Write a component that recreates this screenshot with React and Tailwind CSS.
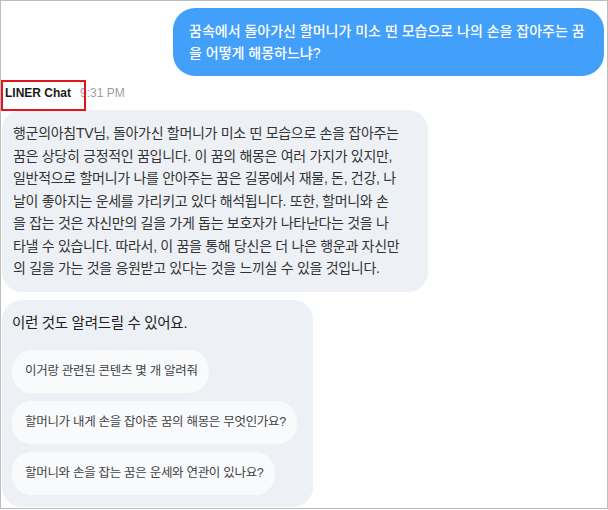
const answer = [
  '행군의아침TV님, 돌아가신 할머니가 미소 띤 모습으로 손을 잡아주는',
  '꿈은 상당히 긍정적인 꿈입니다. 이 꿈의 해몽은 여러 가지가 있지만,',
  '일반적으로 할머니가 나를 안아주는 꿈은 길몽에서 재물, 돈, 건강, 나',
  '날이 좋아지는 운세를 가리키고 있다 해석됩니다. 또한, 할머니와 손',
  '을 잡는 것은 자신만의 길을 가게 돕는 보호자가 나타난다는 것을 나',
  '타낼 수 있습니다. 따라서, 이 꿈을 통해 당신은 더 나은 행운과 자신만',
  '의 길을 가는 것을 응원받고 있다는 것을 느끼실 수 있을 것입니다.',
];

const suggestions = [
  '이거랑 관련된 콘텐츠 몇 개 알려줘',
  '할머니가 내게 손을 잡아준 꿈의 해몽은 무엇인가요?',
  '할머니와 손을 잡는 꿈은 운세와 연관이 있나요?',
];

export default function App() {
  return (
    <div className="relative w-[608px] h-[509px] overflow-hidden border border-[#bdbdbd] bg-white font-['Liberation_Sans','Noto_Sans_CJK_KR',sans-serif]">
      <div className="flex flex-col pl-px pr-[3px] pt-[7px]">
        {/* user question */}
        <div className="self-end w-[431px] rounded-[22px] bg-[#42a0fa] pl-4 pr-3 py-3 text-[14px] leading-[22px] font-medium text-white">
          <div className="whitespace-nowrap">꿈속에서 돌아가신 할머니가 미소 띤 모습으로 나의 손을 잡아주는 꿈</div>
          <div className="whitespace-nowrap">을 어떻게 해몽하느냐?</div>
        </div>

        <div className="flex h-[34px] items-center gap-[9px] pl-[3px] text-[12px]">
          <span className="font-bold text-[#1a1a1a]">LINER Chat</span>
          <span className="text-[#9e9e9e]">9:31 PM</span>
        </div>

        {/* answer */}
        <div className="w-[426px] rounded-[20px] bg-[#edf1f5] px-[11px] py-3 text-[14px] leading-[22.5px] tracking-[-0.3px] text-[#333]">
          {answer.map((line, i) => (
            <div key={i} className="whitespace-nowrap">{line}</div>
          ))}
        </div>

        <div className="mt-2 flex w-[311px] flex-col rounded-[20px] bg-[#edf1f5] pl-[10px] pt-3 pb-3">
          <p className="text-[14.5px] leading-[22px] tracking-[-0.3px] text-[#222]">이런 것도 알려드릴 수 있어요.</p>
          <div className="mt-4 flex flex-col items-start gap-2">
            {suggestions.map((s) => (
              <button
                key={s}
                className="h-[43px] rounded-[20px] bg-[#f8fafc] pl-[13px] pr-[11px] text-[12.5px] tracking-[-0.3px] text-[#444]"
              >
                {s}
              </button>
            ))}
          </div>
        </div>
      </div>

      {/* highlight annotation */}
      <div className="absolute left-0 top-[79px] h-[31px] w-[85px] border-2 border-[#e5141b]" />
    </div>
  );
}
